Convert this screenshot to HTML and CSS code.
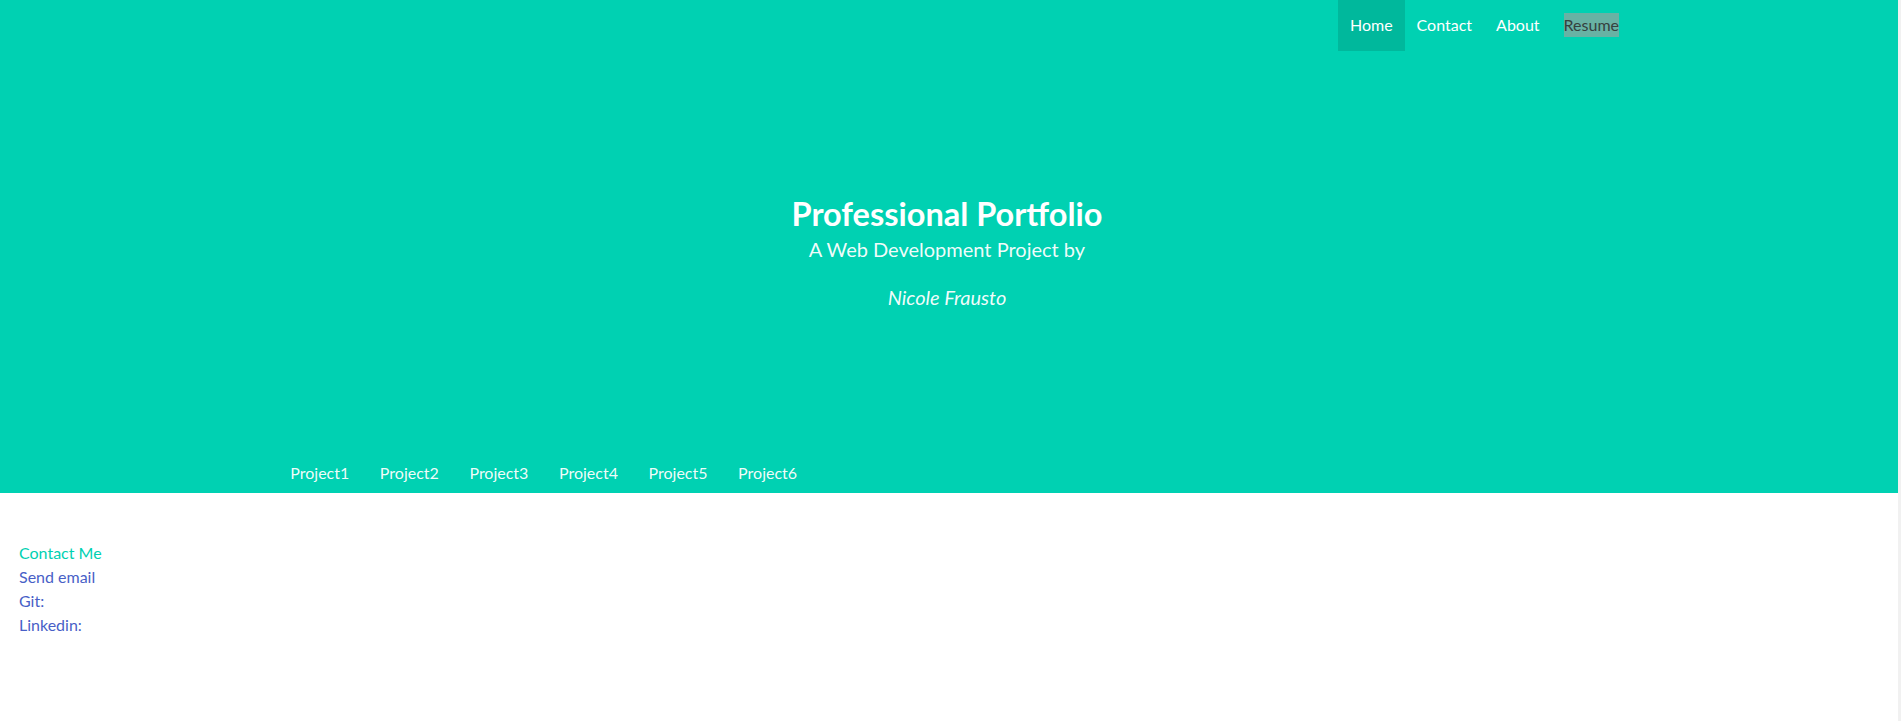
FILE: index.html
```html
<!DOCTYPE html>
<html lang="en">
<head>
<meta charset="utf-8">
<title>Professional Portfolio</title>
<link rel="stylesheet" href="styles.css">
</head>
<body>
<div class="page">
  <section class="hero">
    <nav class="navbar">
      <a class="nav-item is-active" href="#">Home</a>
      <a class="nav-item" href="#">Contact</a>
      <a class="nav-item" href="#">About</a>
      <a class="nav-item" href="#"><span class="resume">Resume</span></a>
    </nav>
    <div class="hero-body">
      <h1 class="title">Professional Portfolio</h1>
      <h2 class="subtitle">A Web Development Project by</h2>
      <p class="author"><em>Nicole Frausto</em></p>
    </div>
    <div class="tabs">
      <a class="tab" href="#">Project1</a>
      <a class="tab" href="#">Project2</a>
      <a class="tab" href="#">Project3</a>
      <a class="tab" href="#">Project4</a>
      <a class="tab" href="#">Project5</a>
      <a class="tab" href="#">Project6</a>
    </div>
  </section>
  <section class="contact">
    <p class="contact-title">Contact Me</p>
    <a class="contact-link" href="#">Send email</a>
    <a class="contact-link" href="#">Git:</a>
    <a class="contact-link" href="#">Linkedin:</a>
  </section>
</div>
</body>
</html>
```

FILE: styles.css
```css
html {
  background: #f1f1f1;
  margin: 0;
  padding: 0;
}
body {
  margin: 0;
  padding: 0;
  font-family: Lato, "Open Sans", sans-serif;
  font-size: 16px;
  line-height: 24px;
  color: #4a4a4a;
}
.page {
  margin-right: 3px;
  background: #fff;
  height: 721px;
}
a {
  text-decoration: none;
}
.hero {
  background: #00d1b2;
  height: 493px;
  display: flex;
  flex-direction: column;
}
.navbar {
  display: flex;
  justify-content: flex-end;
  height: 51px;
  padding-right: 267px;
}
.nav-item {
  display: flex;
  align-items: center;
  padding: 0 12px;
  color: #fff;
  padding-bottom: 1px;
}
.nav-item.is-active {
  background: #00b89c;
}
.resume {
  background: #68b2a4;
  color: #35413e;
  line-height: 24px;
}
.hero-body {
  flex: 1;
  display: flex;
  flex-direction: column;
  align-items: center;
  padding-top: 143px;
  padding-right: 4px;
  color: #fff;
}
.title {
  margin: 0;
  font-size: 32.5px;
  font-weight: 700;
  line-height: 40px;
  color: #fff;
}
.subtitle {
  margin: 0;
  font-size: 20px;
  font-weight: 400;
  line-height: 30px;
  color: rgba(255, 255, 255, 0.95);
}
.author {
  margin: 18px 0 0;
  font-size: 20px;
  line-height: 30px;
  color: rgba(255, 255, 255, 0.95);
}
.tabs {
  display: flex;
  height: 40px;
  padding-left: 275px;
}
.tab {
  display: flex;
  align-items: center;
  padding: 0 15.3px;
  color: rgba(255, 255, 255, 0.95);
}
.contact {
  display: flex;
  flex-direction: column;
  align-items: flex-start;
  padding: 48px 19px;
}
.contact-title {
  margin: 0;
  color: #00d1b2;
}
.contact-link {
  color: #485fc7;
}
```
